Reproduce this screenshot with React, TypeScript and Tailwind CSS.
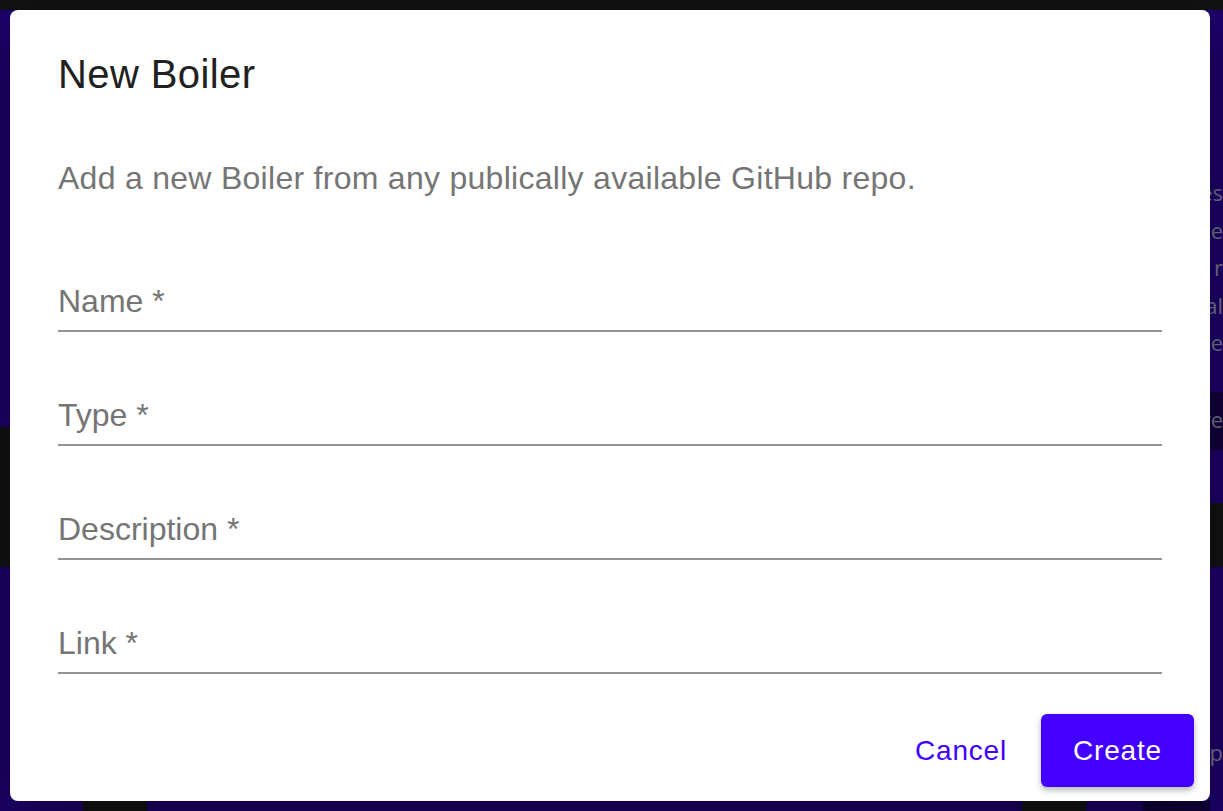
const fields = ["Name", "Type", "Description", "Link"];

const rightBits = ["es", "e", "r", "al", "te"];

function Field({ label }: { label: string }) {
  return (
    <div className="pt-[65px]">
      <div className="text-[32px] leading-[36px] text-[#757575]">{label} *</div>
      <div className="mt-[11px] h-[2px] bg-[#949494]" />
    </div>
  );
}

export default function App() {
  return (
    <main className="relative h-[811px] w-[1223px] overflow-hidden bg-[#1d006b] font-[family-name:'Liberation_Sans',Arial,sans-serif]">
      {/* page behind the dialog */}
      <div className="h-[10px] bg-[#121212]" />
      <div className="flex h-[801px]">
        <div className="flex w-[10px] flex-col">
          <div className="h-[417px] bg-[#1d006b]" />
          <div className="h-[140px] bg-[#121212]" />
          <div className="flex-1 bg-[#1d006b]" />
        </div>
        <div className="flex flex-1 flex-col">
          <div className="flex-1" />
          <div className="flex h-[10px]">
            <div className="w-[73px] bg-[#1d006b]" />
            <div className="w-[64px] bg-[#121212]" />
            <div className="w-[875px] bg-[#1b0066]" />
            <div className="w-[64px] bg-[#121212]" />
            <div className="w-[57px] bg-[#1b0066]" />
            <div className="flex-1 bg-[#10003a]" />
          </div>
        </div>
        <div className="flex w-[13px] flex-col overflow-hidden font-[family-name:'Open_Sans',sans-serif] text-[22px] text-[#74748a]">
          <div className="flex h-[382px] flex-col items-end bg-[#1d006b] pt-[164px] leading-[37.5px]">
            {rightBits.map((b) => (
              <span key={b} className="whitespace-nowrap">
                {b}
              </span>
            ))}
          </div>
          <div className="flex h-[58px] items-center justify-end bg-[#12003d] pb-[4px]">
            <span className="whitespace-nowrap">ve</span>
          </div>
          <div className="h-[53px] bg-[#1d006b]" />
          <div className="h-[64px] bg-[#121212]" />
          <div className="flex flex-1 flex-col items-end justify-end bg-[#1d006b] pb-[42px]">
            <span className="whitespace-nowrap">rp</span>
          </div>
        </div>
      </div>

      {/* dialog */}
      <div className="absolute left-[10px] top-[10px] flex h-[791px] w-[1200px] flex-col rounded-[8px] bg-white shadow-[0_22px_70px_rgba(0,0,0,0.4)]">
        <h2 className="px-[48px] pt-[32px] text-[40px] leading-[64px] tracking-[0.4px] text-[#212121]">
          New Boiler
        </h2>
        <div className="px-[48px]">
          <p className="mt-[48px] mb-[16px] text-[32px] leading-[48px] tracking-[0.28px] text-[#757575]">
            Add a new Boiler from any publically available GitHub repo.
          </p>
          {fields.map((f) => (
            <Field key={f} label={f} />
          ))}
        </div>
        <div className="mt-[40px] flex items-center justify-end gap-[18px] pr-[16px]">
          <button className="h-[73px] px-[16px] text-[28px] tracking-[0.8px] text-[#4000ff]">
            Cancel
          </button>
          <button className="h-[73px] w-[153px] rounded-[6px] bg-[#4300ff] text-[28px] tracking-[0.8px] text-white shadow-[0_3px_6px_rgba(0,0,0,0.3)]">
            Create
          </button>
        </div>
      </div>
    </main>
  );
}
